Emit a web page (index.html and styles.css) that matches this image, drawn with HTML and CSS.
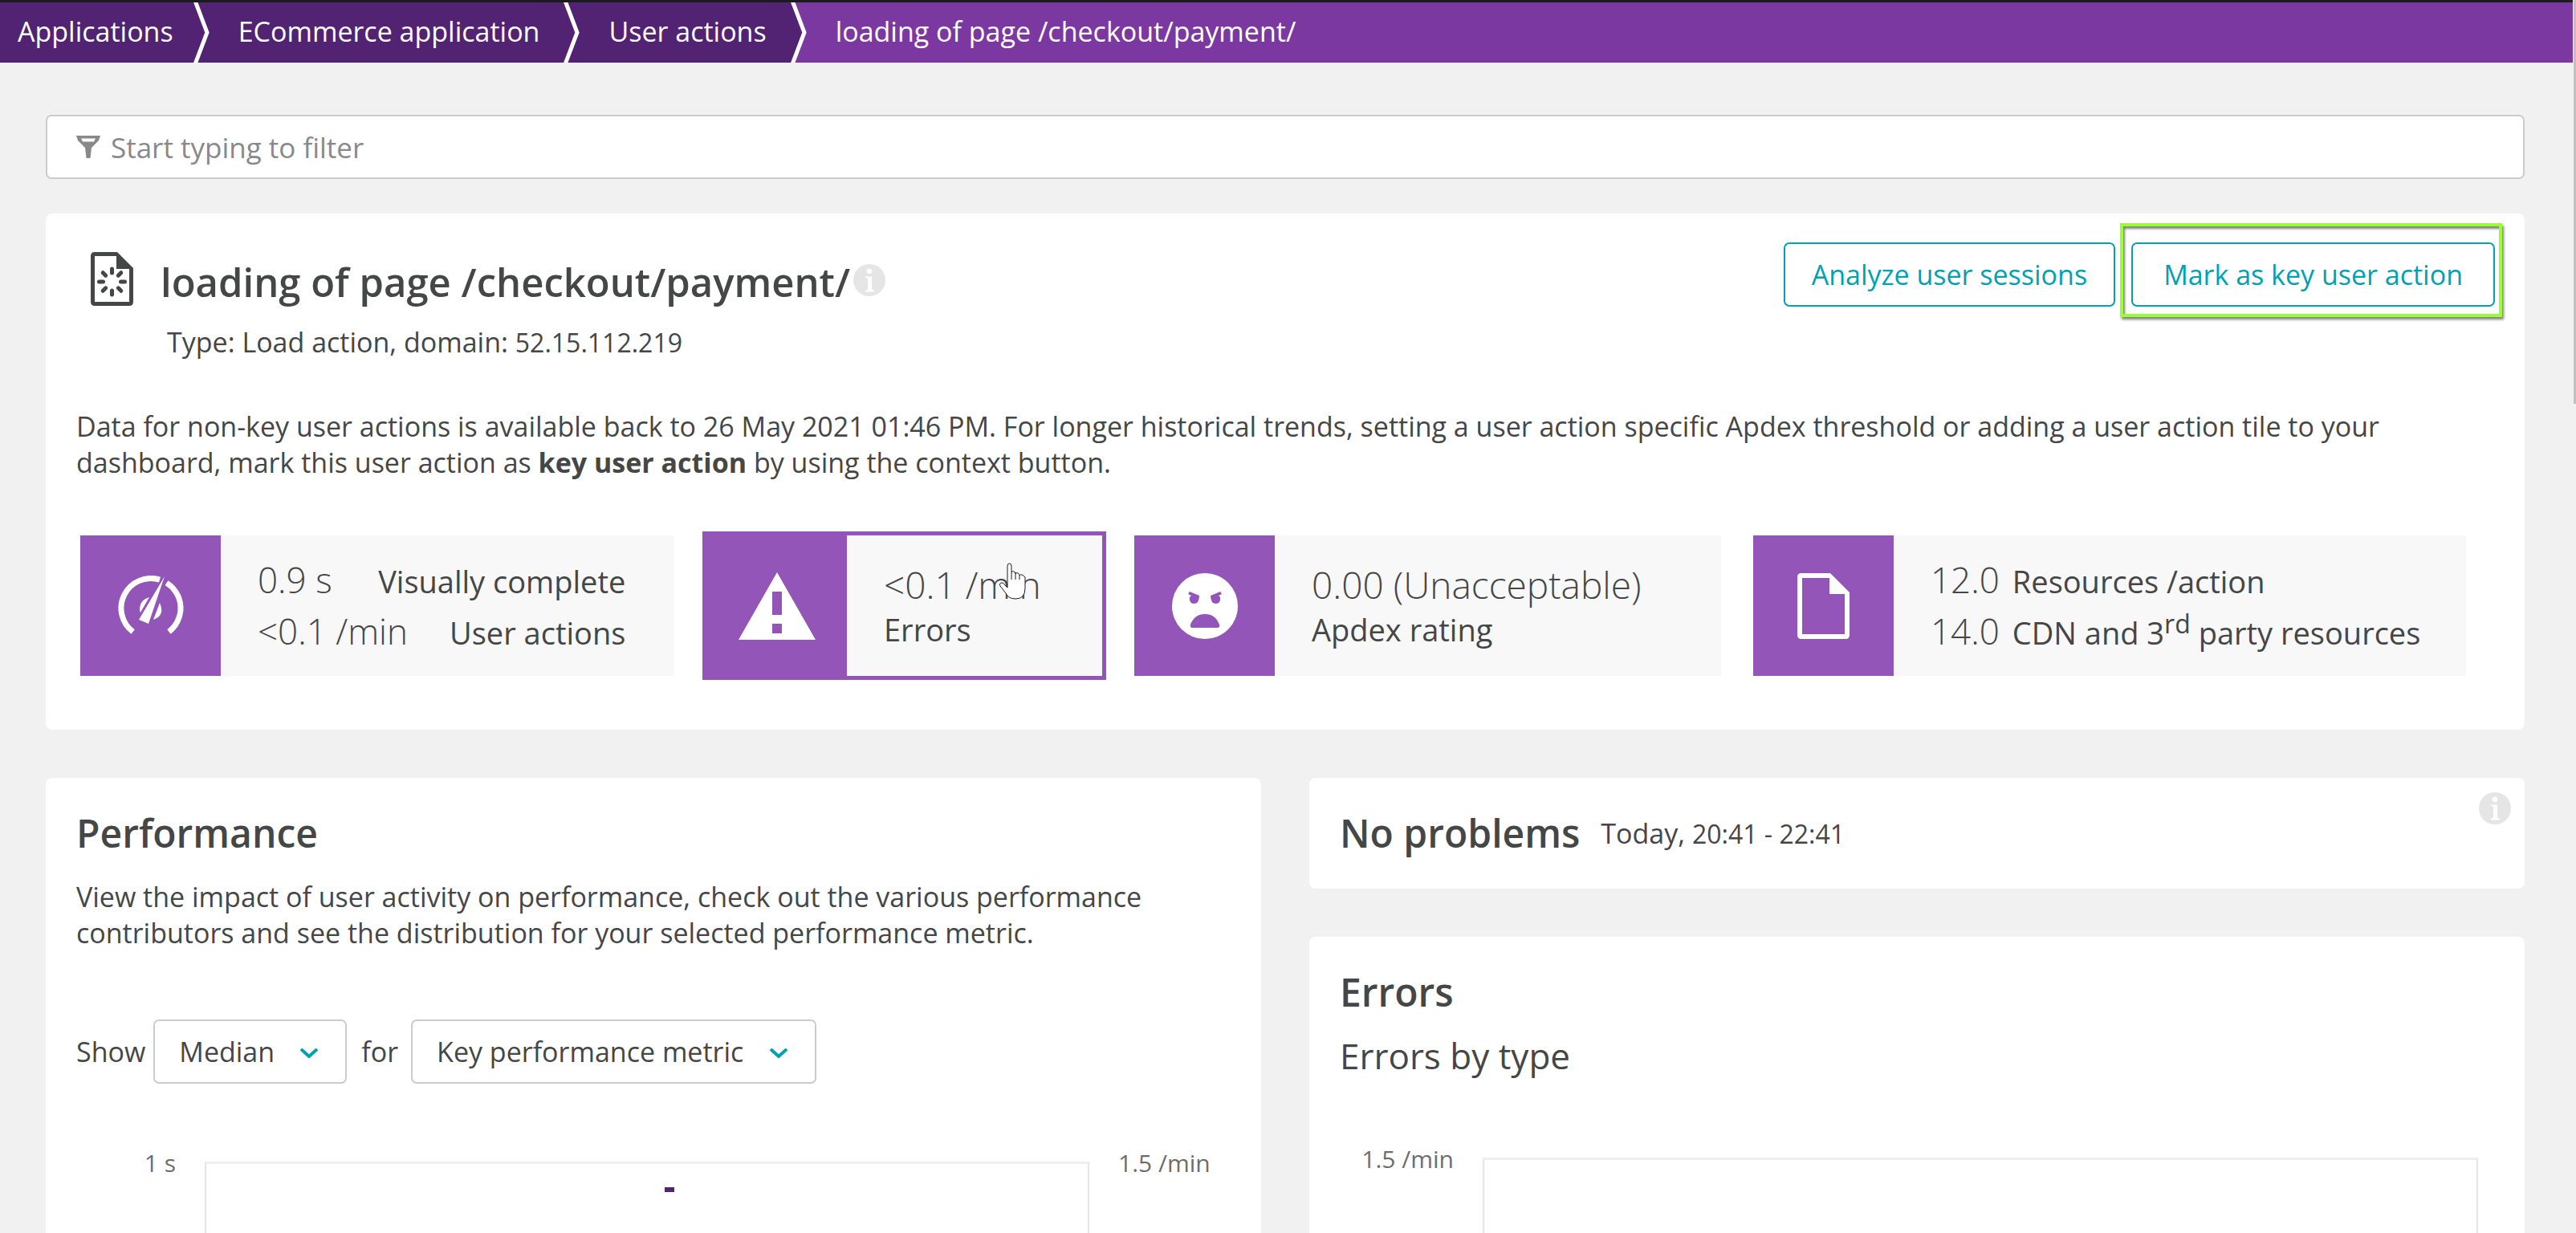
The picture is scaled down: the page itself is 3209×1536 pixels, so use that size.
FILE: index.html
```html
<!DOCTYPE html>
<html lang="en">
<head>
<meta charset="utf-8">
<meta name="viewport" content="width=device-width, initial-scale=1">
<title>loading of page /checkout/payment/</title>
<link rel="stylesheet" href="styles.css">
</head>
<body>
<div class="shell">
  <div class="page">
    <nav class="breadcrumbs" aria-label="Breadcrumb">
      <a class="crumb crumb-first" href="#">Applications</a>
      <svg class="crumb-sep crumb-sep-dark" viewBox="0 0 20 75" aria-hidden="true"><path d="M2 -2 L17 37.500 L2 77" /></svg>
      <a class="crumb" href="#">ECommerce application</a>
      <svg class="crumb-sep crumb-sep-dark" viewBox="0 0 20 75" aria-hidden="true"><path d="M2 -2 L17 37.500 L2 77" /></svg>
      <a class="crumb" href="#">User actions</a>
      <svg class="crumb-sep" viewBox="0 0 20 75" aria-hidden="true"><path class="crumb-sep-fill" d="M0 0H2L17 37.500 2 75H0Z" /><path d="M2 -2 L17 37.500 L2 77" /></svg>
      <span class="crumb crumb-current" aria-current="page">loading of page /checkout/payment/</span>
    </nav>

    <main class="content">
      <label class="filter">
        <svg class="filter-icon" viewBox="0 0 30 28" aria-hidden="true"><path fill-rule="evenodd" d="M0 0H30L28 6L19 15L17.500 28H12.500L11 15L2 6ZM6 3.500L8 7.500H22L24 3.500Z" /></svg>
        <input class="filter-input" type="text" placeholder="Start typing to filter" aria-label="Filter">
      </label>

      <section class="card overview">
        <header class="overview-head">
          <svg class="page-icon" viewBox="0 0 53 67" aria-hidden="true">
            <path d="M5 0H33L53 20V62Q53 67 48 67H5Q0 67 0 62V5Q0 0 5 0ZM5 5V62H48V21H32V5Z" fill-rule="evenodd" />
            <g class="page-icon-rays"><path d="M26.500 21V26M26.500 48V53M10.500 37H15.500M37.500 37H42.500M15.200 25.700L18.700 29.200M34.300 44.800L37.800 48.300M37.800 25.700L34.300 29.200M18.700 44.800L15.200 48.300" /></g>
          </svg>
          <div class="overview-titles">
            <h1 class="title">loading of page /checkout/payment/<svg class="info-icon title-info" viewBox="0 0 40 40" aria-hidden="true"><circle cx="20" cy="20" r="20" /><path d="M20 5.500a3.300 3.300 0 1 1 0 6.600a3.300 3.300 0 1 1 0-6.600ZM15 15.500H23V31.500L26 33V34.500H15V33L18 31.500V18L15 17Z" /></svg></h1>
            <p class="subtitle">Type: Load action, domain: <span class="digits">52.15.112.219</span></p>
          </div>
          <div class="actions">
            <button class="button button-compact" type="button">Analyze user sessions</button>
            <div class="highlight"><button class="button" type="button">Mark as key user action</button></div>
          </div>
        </header>
        <p class="text overview-text">Data for non-key user actions is available back to 26 May 2021 01:46 PM. For longer historical trends, setting a user action specific Apdex threshold or adding a user action tile to your dashboard, mark this user action as <strong>key user action</strong> by using the context button.</p>

        <div class="tiles">
          <a class="tile" href="#">
            <span class="tile-icon">
              <svg class="gauge-icon" viewBox="0 0 82 76" aria-hidden="true">
                <path class="gauge-arc" d="M18.600 70A37 37 0 0 1 52 5.200" />
                <path class="gauge-arc" d="M60.500 9.100A37 37 0 0 1 63.400 70" />
                <path d="M58 1L38 60L26 55Z" />
                <path d="M39 27Q27 30 27 43L28 46ZM52 34Q59 50 44 55Z" />
              </svg>
            </span>
            <span class="tile-body">
              <span class="metrics metrics-spread">
                <span class="metric-row"><span class="value">0.9 s</span><span class="label">Visually complete</span></span>
                <span class="metric-row"><span class="value">&lt;0.1 /min</span><span class="label">User actions</span></span>
              </span>
            </span>
          </a>
          <a class="tile tile-active" href="#">
            <span class="tile-icon">
              <svg class="warning-icon" viewBox="0 0 96 84" aria-hidden="true"><path fill-rule="evenodd" d="M48 0L96 84H0ZM42 24V53H54V24ZM42 64V76H54V64Z" /></svg>
            </span>
            <span class="tile-body">
              <span class="metrics"><span class="value value-stacked">&lt;0.1 /min</span><span class="label label-stacked">Errors</span></span>
            </span>
            <svg class="pointer" viewBox="0 0 34 46" aria-hidden="true"><path d="M11 27V4Q11 1 13.500 1T16 4V12Q17 10 19 11T21 14Q22 12 24 13T26 16Q27 14 29 15T33 18V32Q33 45 21 45Q12 45 9 38L2 29Q0 26 3 25T8 28L11 31Z" /><path d="M16 12V21M21 14V21M26 16V21" /></svg>
          </a>
          <a class="tile" href="#">
            <span class="tile-icon">
              <svg class="face-icon" viewBox="0 0 82 82" aria-hidden="true">
                <circle cx="41" cy="41" r="41" />
                <g class="face-features"><path d="M22 23L34 28Q34 38 27 38Q21 37 22 30L24 28L20 26ZM60 23L48 28Q48 38 55 38Q61 37 60 30L58 28L62 26ZM23 64Q22 68 26 68H56Q60 68 59 64Q54 51 41 51T23 64Z" /></g>
              </svg>
            </span>
            <span class="tile-body">
              <span class="metrics"><span class="value value-stacked">0.00 (Unacceptable)</span><span class="label label-stacked">Apdex rating</span></span>
            </span>
          </a>
          <a class="tile" href="#">
            <span class="tile-icon">
              <svg class="document-icon" viewBox="0 0 65 82" aria-hidden="true"><path fill-rule="evenodd" d="M5 0H41L65 24V77Q65 82 60 82H5Q0 82 0 77V5Q0 0 5 0ZM6 6V76H59V26H40V6Z" /></svg>
            </span>
            <span class="tile-body">
              <span class="metrics">
                <span class="metric-row"><span class="value">12.0</span><span class="label">Resources /action</span></span>
                <span class="metric-row"><span class="value">14.0</span><span class="label">CDN and 3<sup>rd</sup> party resources</span></span>
              </span>
            </span>
          </a>
        </div>
      </section>

      <div class="columns">
        <section class="card performance">
          <h2 class="heading">Performance</h2>
          <p class="text performance-text">View the impact of user activity on performance, check out the various performance contributors and see the distribution for your selected performance metric.</p>
          <div class="controls">
            <label for="aggregation">Show</label>
            <span class="select-box">
              <select id="aggregation" class="select"><option>Median</option></select>
              <svg class="chevron" viewBox="0 0 22 12" aria-hidden="true"><path d="M1 1L11 10L21 1" /></svg>
            </span>
            <label class="control-for" for="metric">for</label>
            <span class="select-box">
              <select id="metric" class="select"><option>Key performance metric</option></select>
              <svg class="chevron" viewBox="0 0 22 12" aria-hidden="true"><path d="M1 1L11 10L21 1" /></svg>
            </span>
          </div>
          <div class="chart chart-performance">
            <span class="axis axis-left">1 s</span>
            <div class="plot"><span class="point"></span></div>
            <span class="axis axis-right">1.5 /min</span>
          </div>
        </section>

        <div class="side">
          <section class="card problems">
            <h2 class="heading">No problems</h2>
            <span class="timeframe">Today, <span class="digits">20:41 - 22:41</span></span>
            <svg class="info-icon corner-info" viewBox="0 0 40 40" aria-hidden="true"><circle cx="20" cy="20" r="20" /><path d="M20 5.500a3.300 3.300 0 1 1 0 6.600a3.300 3.300 0 1 1 0-6.600ZM15 15.500H23V31.500L26 33V34.500H15V33L18 31.500V18L15 17Z" /></svg>
          </section>
          <section class="card errors">
            <h2 class="heading">Errors</h2>
            <h3 class="subheading">Errors by type</h3>
            <div class="chart chart-errors">
              <span class="axis axis-left">1.5 /min</span>
              <div class="plot"></div>
            </div>
          </section>
        </div>
      </div>
    </main>
  </div>
  <div class="scroll-track" aria-hidden="true"><div class="scroll-thumb"></div></div>
</div>
</body>
</html>
```

FILE: styles.css
```css
* {
  box-sizing: border-box;
}

body {
  margin: 0;
  background: #f1f1f1;
  color: #454646;
  font-family: "Open Sans", "Noto Sans", sans-serif;
  font-size: 34px;
  line-height: 45px;
}

h1, h2, h3, p {
  margin: 0;
}

a {
  color: inherit;
  text-decoration: none;
}

svg {
  display: block;
  flex: none;
  fill: currentColor;
}

.digits {
  font-size: 32px;
}

.shell {
  display: flex;
  height: 100vh;
  overflow: hidden;
}

.page {
  flex: 1;
  min-width: 0;
  display: flex;
  flex-direction: column;
}

.scroll-track {
  width: 4px;
  padding-left: 1px;
  background: #f1f1f1;
}

.scroll-thumb {
  height: 503px;
  background: #c1c1c1;
}

/* Breadcrumbs */

.breadcrumbs {
  display: flex;
  flex: none;
  height: 78px;
  border-top: 3px solid #1b1b1b;
  background: #7c38a1;
  color: #fff;
  line-height: 73px;
  white-space: nowrap;
}

.crumb {
  padding: 0 30px 0 36px;
  background: #522273;
}

.crumb-first {
  padding: 0 25px 0 22px;
}

.crumb-current {
  background: none;
}

.crumb-sep {
  width: 20px;
  height: 75px;
  fill: none;
  stroke: #fff;
  stroke-width: 5;
}

.crumb-sep-dark {
  background: #522273;
}

.crumb-sep-fill {
  fill: #522273;
  stroke: none;
}

/* Content */

.content {
  flex: 1;
  min-height: 0;
  display: flex;
  flex-direction: column;
  padding: 65px 60px 0 57px;
}

.filter {
  display: flex;
  align-items: center;
  flex: none;
  height: 80px;
  margin-bottom: 43px;
  padding: 0 36px;
  border: 2px solid #ccc;
  border-radius: 7px;
  background: #fff;
  font-size: 35px;
}

.filter-icon {
  width: 30px;
  height: 28px;
  margin-right: 13px;
  color: #898989;
}

.filter-input {
  flex: 1;
  min-width: 0;
  padding: 0;
  border: 0;
  outline: 0;
  background: none;
  color: inherit;
  font: inherit;
}

.filter-input::placeholder {
  color: #898989;
  opacity: 1;
}

.card {
  padding: 37px 38px 0;
  border-radius: 8px;
  background: #fff;
}

.overview {
  flex: none;
  padding: 36px 37px 67px 38px;
}

.overview-head {
  display: flex;
}

.page-icon {
  width: 53px;
  height: 67px;
  margin: 12px 34px 0 18px;
}

.page-icon-rays {
  fill: none;
  stroke: currentColor;
  stroke-width: 5;
  stroke-linecap: round;
}

.overview-titles {
  flex: 1;
  padding-top: 17px;
}

.title {
  display: flex;
  align-items: center;
  font-size: 49px;
  font-weight: 600;
  line-height: 64px;
}

.info-icon {
  width: 40px;
  height: 40px;
  fill: #e5e5e5;
}

.info-icon path {
  fill: #fff;
}

.title-info {
  margin: 0 0 4px 4px;
}

.subtitle {
  margin-top: 21px;
  padding-left: 8px;
}

.actions {
  display: flex;
  align-items: flex-start;
  gap: 20px;
}

.button {
  height: 80px;
  padding: 0 38px;
  border: 2px solid #00a1b2;
  border-radius: 7px;
  background: #fff;
  color: #00a1b2;
  font: inherit;
  white-space: nowrap;
}

.button-compact {
  padding: 0 33px;
}

.highlight {
  position: relative;
}

.highlight::after {
  content: "";
  position: absolute;
  inset: -24px -9px -13px -14px;
  border: 4px solid #9f3;
  box-shadow: 2px 3px 3px rgba(0, 0, 0, 0.5), inset 2px 3px 3px rgba(0, 0, 0, 0.5);
  pointer-events: none;
}

.overview-text {
  margin-top: 60px;
}

/* Metric tiles */

.tiles {
  display: grid;
  grid-template-columns: 740fr 493fr 731fr 888fr;
  gap: 40px;
  margin: 68px 36px 0 5px;
}

.tile {
  position: relative;
  display: flex;
  height: 175px;
  background: #f8f8f8;
  white-space: nowrap;
}

.tile-active {
  box-shadow: 0 0 0 5px #9355b7;
}

.tile-icon {
  display: flex;
  align-items: center;
  justify-content: center;
  flex: none;
  width: 175px;
  background: #9355b7;
  color: #fff;
}

.tile-body {
  display: flex;
  align-items: center;
  padding-left: 46px;
}

.metrics {
  display: flex;
  flex-direction: column;
}

.metric-row {
  display: flex;
  align-items: baseline;
  gap: 16px;
  line-height: 62px;
}

.metrics-spread .metric-row {
  justify-content: space-between;
  gap: 52px;
}

.value {
  font-size: 44px;
  font-weight: 300;
}

.value-stacked {
  font-size: 46px;
  line-height: 58px;
}

.label {
  font-size: 38px;
}

.label-stacked {
  line-height: 54px;
}

.label sup {
  font-size: 32px;
  line-height: 0;
}

.gauge-icon {
  width: 82px;
  height: 76px;
}

.gauge-arc {
  fill: none;
  stroke: currentColor;
  stroke-width: 7;
}

.warning-icon {
  width: 96px;
  height: 84px;
}

.face-icon {
  width: 82px;
  height: 82px;
}

.face-features {
  fill: #9355b7;
}

.document-icon {
  width: 65px;
  height: 82px;
}

.pointer {
  position: absolute;
  top: 34px;
  left: 364px;
  width: 34px;
  height: 46px;
  fill: #fff;
  stroke: #1b1b2b;
  stroke-width: 1;
}

/* Lower columns */

.columns {
  flex: 1;
  min-height: 0;
  display: grid;
  grid-template-columns: 1fr 1fr;
  gap: 60px;
  margin-top: 60px;
}

.heading {
  font-size: 48px;
  font-weight: 600;
  line-height: 64px;
}

.performance,
.errors {
  display: flex;
  flex-direction: column;
  min-height: 0;
  border-radius: 8px 8px 0 0;
}

.performance-text {
  margin-top: 25px;
}

.controls {
  display: flex;
  align-items: center;
  margin-top: 85px;
}

.control-for {
  margin-left: 18px;
}

.select-box {
  position: relative;
  margin-left: 10px;
}

.control-for + .select-box {
  margin-left: 16px;
}

.select {
  display: block;
  height: 80px;
  padding: 0 88px 0 30px;
  border: 2px solid #ccc;
  border-radius: 7px;
  background: #fff;
  color: inherit;
  font: inherit;
  appearance: none;
}

.chevron {
  position: absolute;
  top: 36px;
  right: 36px;
  width: 22px;
  height: 12px;
  fill: none;
  stroke: #00a1b2;
  stroke-width: 4;
  pointer-events: none;
}

.side {
  display: flex;
  flex-direction: column;
  gap: 60px;
  min-height: 0;
}

.problems {
  position: relative;
  display: flex;
  align-items: center;
  flex: none;
  gap: 26px;
  padding-bottom: 37px;
}

.corner-info {
  position: absolute;
  top: 18px;
  right: 17px;
}

.errors {
  flex: 1;
}

.subheading {
  margin-top: 17px;
  font-size: 44px;
  font-weight: 400;
  line-height: 60px;
}

/* Charts */

.chart {
  flex: 1;
  display: grid;
}

.chart-performance {
  grid-template-columns: 160px 1fr 176px;
  margin-top: 97px;
}

.chart-errors {
  grid-template-columns: 178px 1fr;
  margin: 97px 20px 0 0;
}

.plot {
  position: relative;
  border: solid #e6e6e6;
  border-width: 3px 2px 0;
  border-top-color: #efefef;
}

.point {
  position: absolute;
  top: 29px;
  left: 52%;
  width: 12px;
  height: 6px;
  background: #522273;
}

.axis {
  margin-top: -17px;
  color: #6d6d6d;
  font-size: 30px;
  line-height: 38px;
}

.axis-left {
  padding-right: 36px;
  text-align: right;
}

.axis-right {
  padding-left: 36px;
}
```
